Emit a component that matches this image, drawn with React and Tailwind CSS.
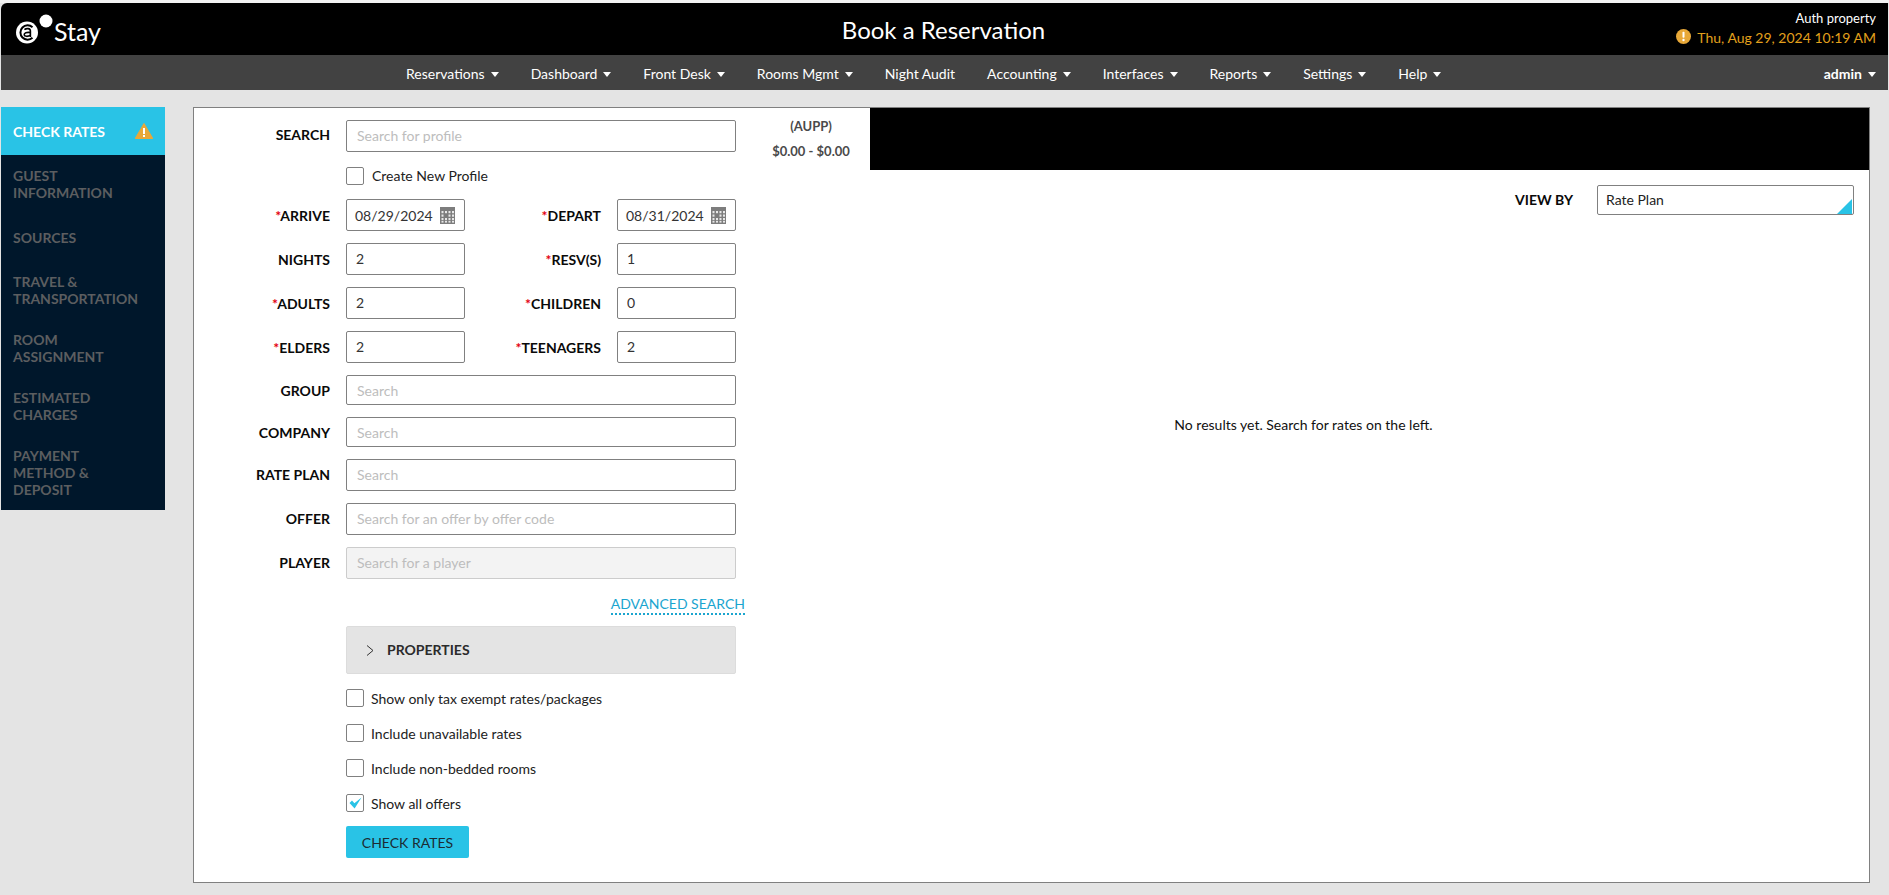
import React from "react";

const Caret = () => (
  <svg width="8" height="5" viewBox="0 0 8 5" className="shrink-0 mt-[2px]">
    <path d="M0 0h8L4 5z" fill="#ffffff" />
  </svg>
);

const Logo = () => (
  <svg width="38" height="36" viewBox="0 0 38 36" className="shrink-0">
    <circle cx="11" cy="20.5" r="11" fill="#ffffff" />
    <circle cx="30" cy="9" r="6.5" fill="#ffffff" />
    <path d="M16.5 15.2 A7.2 7.2 0 1 0 16.5 25.8" fill="none" stroke="#000" strokeWidth="2" />
    <path d="M8.4 17.6 C10.4 16 14.4 16.2 14.4 19 V25 M14.4 20.6 C10.6 20 8 21 8.2 22.8 C8.4 24.6 12 25 14.4 23" fill="none" stroke="#000" strokeWidth="1.6" />
  </svg>
);

const Calendar = () => (
  <svg width="15" height="17" viewBox="0 0 15 17" className="shrink-0">
    <rect width="15" height="17" fill="#7d7d7d" />
    {[4, 7.5, 11].map((y) =>
      [1.5, 5, 8.5, 12].map((x) => (
        <rect key={x + "-" + y} x={x} y={y} width="2" height="2.2" fill={x === 5 && y === 7.5 ? "#7d7d7d" : "#e8e8e8"} />
      ))
    )}
    {[1.5, 5, 8.5, 12].map((x) => (
      <rect key={x} x={x} y="14" width="2" height="1.6" fill="#e8e8e8" />
    ))}
  </svg>
);

const Req = () => <span className="text-[#e3000f]">*</span>;

const Label = ({ req, children, className = "" }) => (
  <label className={"shrink-0 text-right text-[14px] font-bold text-[#0a0a0a] leading-[20px] " + className}>
    {req && <Req />}
    {children}
  </label>
);

const inputBase =
  "min-w-0 rounded-[2px] border text-[14px] text-[#333333] outline-none placeholder:text-[#bdbdbd] font-['Lato',sans-serif]";

const WideRow = ({ label, placeholder, h = "h-[32px] pb-[2px]", mb = "mb-[12px]", disabled = false, labelClass = "" }) => (
  <div className={"flex items-center gap-[16px] " + mb}>
    <Label className={"w-[136px] " + labelClass}>{label}</Label>
    <input
      readOnly
      placeholder={placeholder}
      className={
        inputBase +
        " w-[390px] pl-[10px] " +
        h +
        (disabled ? " border-[#cccccc] bg-[#f3f3f3]" : " border-[#808080] bg-white")
      }
    />
  </div>
);

const SmallInput = ({ value }) => (
  <input readOnly value={value} className={inputBase + " h-[32px] w-[119px] border-[#808080] bg-white pb-[1px] pl-[9px]"} />
);

const DateInput = ({ value }) => (
  <div className="flex h-[32px] w-[119px] items-center justify-between rounded-[2px] border border-[#808080] bg-white pl-[8px] pr-[9px] text-[14px] text-[#333333]">
    <span>{value}</span>
    <Calendar />
  </div>
);

const DoubleRow = ({ l1, r1, v1, l2, r2, v2, date }) => (
  <div className="mb-[12px] flex items-center">
    <Label req={r1} className="mt-[2px] w-[136px]">{l1}</Label>
    <div className="ml-[16px]">{date ? <DateInput value={v1} /> : <SmallInput value={v1} />}</div>
    <Label req={r2} className="mt-[2px] w-[136px]">{l2}</Label>
    <div className="ml-[16px]">{date ? <DateInput value={v2} /> : <SmallInput value={v2} />}</div>
  </div>
);

const Check = ({ checked }) => (
  <span className="flex h-[18px] w-[18px] shrink-0 items-center justify-center rounded-[2px] border border-[#808080] bg-white">
    {checked && (
      <svg width="13" height="12" viewBox="0 0 13 12">
        <path d="M0.5 6 L3 3.6 L5.4 6.2 L12.5 0.5 L5.6 11.5 Z" fill="#29c3e6" />
      </svg>
    )}
  </span>
);

const CheckRow = ({ label, checked, mb = "mb-[17px]" }) => (
  <div className={"flex h-[18px] items-center gap-[7px] text-[14px] leading-[18px] text-[#222222] " + mb}>
    <Check checked={checked} />
    <span className="pt-[1px]">{label}</span>
  </div>
);

const navItems = [
  ["Reservations", true],
  ["Dashboard", true],
  ["Front Desk", true],
  ["Rooms Mgmt", true],
  ["Night Audit", false],
  ["Accounting", true],
  ["Interfaces", true],
  ["Reports", true],
  ["Settings", true],
  ["Help", true],
];

const sideItems = [
  { t: ["GUEST", "INFORMATION"], c: "mb-[28px]" },
  { t: ["SOURCES"], c: "mb-[27px]" },
  { t: ["TRAVEL &", "TRANSPORTATION"], c: "mb-[24px]" },
  { t: ["ROOM", "ASSIGNMENT"], c: "mb-[24px]" },
  { t: ["ESTIMATED", "CHARGES"], c: "mb-[24px]" },
  { t: ["PAYMENT", "METHOD &", "DEPOSIT"], c: "" },
];

export default function App() {
  return (
    <div className="flex h-[895px] w-full flex-col overflow-hidden bg-[#e4e4e4] font-['Lato',sans-serif]">
      <div className="h-[3px] shrink-0 bg-[#f2f2f2]" />
      <header className="ml-[1px] mr-[1px] grid h-[52px] shrink-0 grid-cols-3 items-center rounded-tl-[6px] bg-black text-white">
        <div className="flex items-center pl-[15px] pt-[1px]">
          <Logo />
          <span className="mt-[3px] text-[25px] font-normal leading-[32px]">Stay</span>
        </div>
        <div className="pr-[2px] pt-[1px] text-center text-[24px] leading-[30px]">Book a Reservation</div>
        <div className="flex flex-col items-end pb-[3px] pr-[12px]">
          <span className="mt-[1px] text-[13px] leading-[18px]">Auth property</span>
          <div className="mt-[1px] flex items-center gap-[6px] text-[14px] leading-[20px] text-[#e3a11c]">
            <svg width="15" height="15" viewBox="0 0 15 15" className="-mt-[3px]">
              <circle cx="7.5" cy="7.5" r="7.5" fill="#e8a838" />
              <rect x="6.5" y="2.8" width="2" height="6" rx="0.8" fill="#ffffff" />
              <circle cx="7.5" cy="11" r="1.2" fill="#ffffff" />
            </svg>
            <span>Thu, Aug 29, 2024 10:19 AM</span>
          </div>
        </div>
      </header>
      <nav className="ml-[1px] mr-[1px] flex h-[35px] shrink-0 items-center justify-between bg-[#424242] pl-[405px] pr-[12px] pt-[1px] text-[14px] text-white">
        <div className="flex items-center gap-[32px]">
          {navItems.map(([t, c]) => (
            <div key={t} className="flex items-center gap-[6px]">
              <span>{t}</span>
              {c && <Caret />}
            </div>
          ))}
        </div>
        <div className="flex items-center gap-[6px] font-bold">
          <span>admin</span>
          <Caret />
        </div>
      </nav>
      <div className="flex flex-1 items-start gap-[28px] pl-[1px] pr-[19px] pt-[17px]">
        <aside className="w-[164px] shrink-0 bg-[#00172b] text-[14px] font-bold leading-[17px]">
          <div className="flex h-[48px] items-center justify-between bg-[#29c3e6] pl-[12px] pr-[12px] text-white">
            <span>CHECK RATES</span>
            <svg width="18" height="16" viewBox="0 0 18 16">
              <path d="M9 0.5 L17.8 15.5 H0.2 Z" fill="#e8a838" stroke="#e8a838" strokeLinejoin="round" />
              <rect x="8" y="5" width="2" height="6" fill="#ffffff" />
              <rect x="8" y="12" width="2" height="2" fill="#ffffff" />
            </svg>
          </div>
          <div className="flex flex-col px-[12px] pb-[12px] pt-[12px] text-[#5c5e60]">
            {sideItems.map((it) => (
              <div key={it.t[0]} className={it.c}>
                {it.t.map((line) => (
                  <div key={line}>{line}</div>
                ))}
              </div>
            ))}
          </div>
        </aside>
        <main className="flex h-[776px] min-w-0 flex-1 border border-[#808080] bg-white">
          <section className="w-[542px] shrink-0 pt-[12px]">
            <div className="mb-[15px]">
              <WideRow label="SEARCH" placeholder="Search for profile" mb="" labelClass="-mt-[2px]" />
            </div>
            <div className="mb-[14px] flex items-center gap-[8px] pl-[152px] text-[14px] leading-[18px] text-[#222222]">
              <Check />
              <span>Create New Profile</span>
            </div>
            <DoubleRow date l1="ARRIVE" r1 v1="08/29/2024" l2="DEPART" r2 v2="08/31/2024" />
            <DoubleRow l1="NIGHTS" v1="2" l2="RESV(S)" r2 v2="1" />
            <DoubleRow l1="ADULTS" r1 v1="2" l2="CHILDREN" r2 v2="0" />
            <DoubleRow l1="ELDERS" r1 v1="2" l2="TEENAGERS" r2 v2="2" />
            <WideRow label="GROUP" placeholder="Search" h="h-[30px]" labelClass="mt-[2px]" />
            <WideRow label="COMPANY" placeholder="Search" h="h-[30px]" labelClass="mt-[2px]" />
            <WideRow label="RATE PLAN" placeholder="Search" />
            <WideRow label="OFFER" placeholder="Search for an offer by offer code" />
            <WideRow label="PLAYER" placeholder="Search for a player" mb="" disabled />
            <div className="-mr-[9px] mt-[16px] flex justify-end">
              <a className="border-b-2 border-dotted border-[#1aa5cf] text-[14px] leading-[18px] text-[#1aa5cf]">ADVANCED SEARCH</a>
            </div>
            <div className="ml-[152px] mt-[11px] flex h-[48px] w-[390px] items-center gap-[13px] rounded-[2px] border border-[#dcdcdc] bg-[#e4e4e4] pb-[2px] pl-[19px] text-[14px] font-bold text-[#2b2b2b]">
              <svg width="8" height="11" viewBox="0 0 8 11" className="mt-[3px]">
                <path d="M1 0.5 L7 5.5 L1 10.5" fill="none" stroke="#333333" strokeWidth="1" />
              </svg>
              <span>PROPERTIES</span>
            </div>
            <div className="ml-[152px] mt-[15px]">
              <CheckRow label="Show only tax exempt rates/packages" />
              <CheckRow label="Include unavailable rates" />
              <CheckRow label="Include non-bedded rooms" />
              <CheckRow label="Show all offers" checked mb="mb-[14px]" />
              <button className="h-[32px] w-[123px] rounded-[2px] bg-[#29c3e6] text-[14px] text-[#1c2b33]">CHECK RATES</button>
            </div>
          </section>
          <section className="flex min-w-0 flex-1 flex-col">
            <div className="flex h-[62px] shrink-0">
              <div className="w-[134px] shrink-0 pl-[16px] pt-[6px] text-center text-[13px] font-bold leading-[25px] text-[#4a4a4a]">
                <div>(AUPP)</div>
                <div>$0.00 - $0.00</div>
              </div>
              <div className="flex-1 bg-black" />
            </div>
            <div className="mt-[15px] flex items-center justify-end gap-[24px] pr-[15px]">
              <span className="pb-[2px] text-[14px] font-bold text-[#0a0a0a]">VIEW BY</span>
              <div className="flex h-[30px] w-[257px] items-center justify-between rounded-[2px] border border-[#808080] pl-[8px] text-[14px] text-[#222222]">
                <span className="pb-[2px]">Rate Plan</span>
                <svg width="15" height="15" viewBox="0 0 15 15" className="mr-[1px] mt-[12px] shrink-0">
                  <path d="M15 0 V15 H0 Z" fill="#29c3e6" />
                </svg>
              </div>
            </div>
            <p className="mt-[200px] pl-[2px] text-center text-[14px] leading-[20px] text-[#111111]">No results yet. Search for rates on the left.</p>
          </section>
        </main>
      </div>
    </div>
  );
}
